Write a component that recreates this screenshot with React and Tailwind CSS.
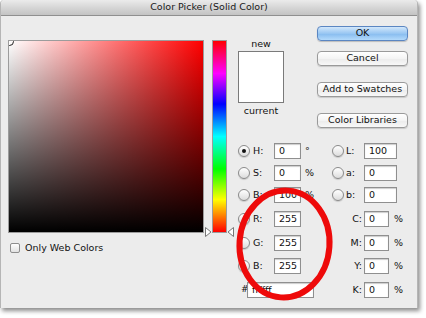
import React from "react";

const font = { fontFamily: '"DejaVu Sans", "Liberation Sans", sans-serif' };

function Radio({ checked }) {
  return (
    <div className="relative w-[12px] h-[12px] shrink-0 rounded-full border border-[#8a8a8a] bg-[linear-gradient(to_bottom,#ffffff,#dcdcdc)] shadow-[0_1px_1px_rgba(0,0,0,0.15)]">
      {checked && <div className="absolute left-[3px] top-[3px] w-[4px] h-[4px] rounded-full bg-[#111]" />}
    </div>
  );
}

function Field({ value, w }) {
  return (
    <div
      className={`h-[16px] ${w} shrink-0 bg-white border border-[#8f8f8f] shadow-[inset_0_1px_1px_rgba(0,0,0,0.2)] pl-[4px] text-[9.5px] leading-[14px] text-[#111]`}
    >
      {value}
    </div>
  );
}

function LeftRow({ label, value, unit, checked }) {
  return (
    <div className="flex items-center h-[16px] w-[94px]">
      <Radio checked={checked} />
      <div className="ml-[3px] w-[21px] text-[9.5px] text-[#111]">{label}</div>
      <Field value={value} w="w-[27px]" />
      <div className="ml-[4px] text-[9.5px] text-[#111]">{unit}</div>
    </div>
  );
}

function LabRow({ label, value }) {
  return (
    <div className="flex items-center h-[16px]">
      <Radio />
      <div className="ml-[2px] w-[18px] text-[9.5px] text-[#111]">{label}</div>
      <Field value={value} w="w-[33px]" />
    </div>
  );
}

function CmykRow({ label }) {
  return (
    <div className="flex items-center h-[16px]">
      <div className="w-[32px] pr-[2px] text-right text-[9.5px] text-[#111]">{label}</div>
      <Field value="0" w="w-[25px]" />
      <div className="ml-[5px] text-[9.5px] text-[#111]">%</div>
    </div>
  );
}

function Button({ children, primary }) {
  return (
    <div
      className={
        primary
          ? "h-[15px] w-[91px] rounded-[4px] border border-[#5b86c2] bg-[linear-gradient(to_bottom,#d2e7fb,#98c6f2_50%,#86bbef_51%,#b3dafb)] flex items-center justify-center text-[9.5px] text-[#111] shadow-[0_1px_1px_rgba(0,0,0,0.2)]"
          : "h-[15px] w-[91px] rounded-[4px] border border-[#9a9a9a] bg-[linear-gradient(to_bottom,#ffffff,#f4f4f4_50%,#ebebeb_51%,#f8f8f8)] flex items-center justify-center text-[9.5px] text-[#111] shadow-[0_1px_1px_rgba(0,0,0,0.15)]"
      }
    >
      {children}
    </div>
  );
}

export default function App() {
  return (
    <div className="w-[426px] h-[318px] bg-white overflow-hidden" style={font}>
      <div className="relative w-[418px] h-[308px] bg-[#ececec] rounded-t-[4px] shadow-[2px_3px_4px_rgba(0,0,0,0.45)] border-x border-[#b5b5b5]">
        {/* title bar */}
        <div className="h-[16px] rounded-t-[4px] bg-[linear-gradient(to_bottom,#ebebeb,#d2d2d2_60%,#c3c3c3)] border-b border-[#8f8f8f] flex items-center justify-center text-[9.5px] text-[#1a1a1a]">
          Color Picker (Solid Color)
        </div>

        <div className="flex pt-[10px]">
          {/* left column: colour field */}
          <div className="pl-[7px] pt-[14px]">
            <div className="relative w-[196px] h-[193px] border border-[#9c9c9c] overflow-hidden bg-[linear-gradient(to_top,#000,rgba(0,0,0,0)),linear-gradient(to_right,#fff,#f00)]">
              <div className="absolute left-[-4px] top-[-4px] w-[9px] h-[9px] rounded-full border border-[#222]" />
            </div>
            <div className="flex items-center mt-[8px] ml-[2px]">
              <div className="w-[10px] h-[10px] rounded-[2px] border border-[#8e8e8e] bg-[linear-gradient(to_bottom,#fff,#e2e2e2)]" />
              <div className="ml-[5px] text-[9.5px] text-[#111]">Only Web Colors</div>
            </div>
          </div>

          {/* hue bar */}
          <div className="relative ml-[8px] mt-[14px]">
            <div className="w-[15px] h-[193px] border border-[#9c9c9c] bg-[linear-gradient(to_bottom,#f00,#f0f_17%,#00f_33%,#0ff_50%,#0f0_67%,#ff0_83%,#f00)]" />
            <svg className="absolute left-[-7px] top-[187px]" width="7" height="10" viewBox="0 0 7 10">
              <path d="M0.5 0.5 L6 5 L0.5 9.5 Z" fill="#fff" stroke="#777" strokeWidth="1" />
            </svg>
            <svg className="absolute left-[15px] top-[187px]" width="7" height="10" viewBox="0 0 7 10">
              <path d="M6.5 0.5 L1 5 L6.5 9.5 Z" fill="#fff" stroke="#777" strokeWidth="1" />
            </svg>
          </div>

          {/* right column */}
          <div className="ml-[11px] flex flex-col">
            <div className="flex">
              <div className="w-[46px] pt-[12px] flex flex-col items-center">
                <div className="h-[11px] leading-[11px] text-[9.5px] text-[#111]">new</div>
                <div className="mt-[2px] w-[46px] h-[52px] bg-white border border-[#7a7a7a]" />
                <div className="mt-[2px] h-[11px] leading-[11px] text-[9.5px] text-[#111]">current</div>
              </div>
              <div className="ml-[33px] flex flex-col">
                <Button primary>OK</Button>
                <div className="mt-[10px]"><Button>Cancel</Button></div>
                <div className="mt-[16px]"><Button>Add to Swatches</Button></div>
                <div className="mt-[16px]"><Button>Color Libraries</Button></div>
              </div>
            </div>

            <div className="mt-[15px] flex flex-col">
              <div className="flex">
                <LeftRow label="H:" value="0" unit="°" checked />
                <LabRow label="L:" value="100" />
              </div>
              <div className="flex mt-[6px]">
                <LeftRow label="S:" value="0" unit="%" />
                <LabRow label="a:" value="0" />
              </div>
              <div className="flex mt-[6px]">
                <LeftRow label="B:" value="100" unit="%" />
                <LabRow label="b:" value="0" />
              </div>
              <div className="flex mt-[8px]">
                <LeftRow label="R:" value="255" />
                <CmykRow label="C:" />
              </div>
              <div className="flex mt-[8px]">
                <LeftRow label="G:" value="255" />
                <CmykRow label="M:" />
              </div>
              <div className="flex mt-[7px]">
                <LeftRow label="B:" value="255" />
                <CmykRow label="Y:" />
              </div>
              <div className="flex mt-[8px]">
                <div className="flex items-center h-[16px] w-[94px]">
                  <div className="ml-[3px] w-[6px] text-[9px] text-[#111]">#</div>
                  <Field value="ffffff" w="w-[67px]" />
                </div>
                <CmykRow label="K:" />
              </div>
            </div>
          </div>
        </div>

        {/* red annotation ellipse */}
        <svg className="absolute left-[230px] top-[183px] pointer-events-none" width="108" height="124" viewBox="0 0 108 124">
          <ellipse cx="53.5" cy="61" rx="45" ry="53.5" fill="none" stroke="#ee0a0a" strokeWidth="6" transform="rotate(4 53.5 61)" />
        </svg>
      </div>
    </div>
  );
}
